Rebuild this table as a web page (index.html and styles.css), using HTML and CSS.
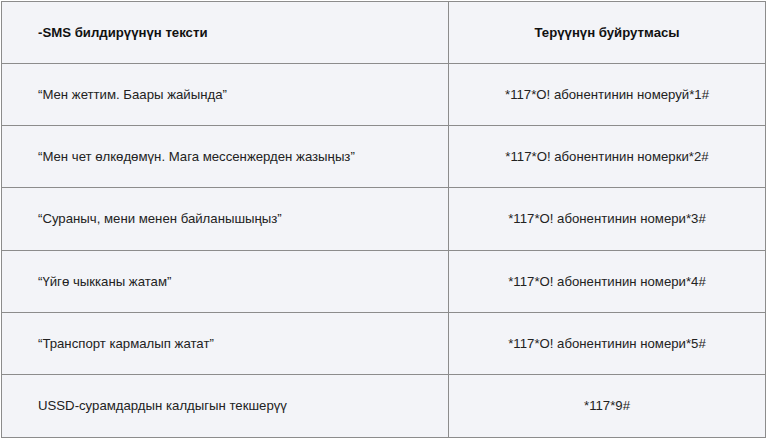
FILE: index.html
```html
<!DOCTYPE html>
<html lang="ky">
<head>
<meta charset="utf-8">
<title>USSD</title>
<link rel="stylesheet" href="styles.css">
</head>
<body>
<table class="sms-table">
  <thead>
    <tr>
      <th class="col-text">-SMS билдирүүнүн тексти</th>
      <th class="col-code">Терүүнүн буйрутмасы</th>
    </tr>
  </thead>
  <tbody>
    <tr>
      <td class="col-text">“Мен жеттим. Баары жайында”</td>
      <td class="col-code">*117*O! абонентинин номеруй*1#</td>
    </tr>
    <tr>
      <td class="col-text">“Мен чет өлкөдөмүн. Мага мессенжерден жазыңыз”</td>
      <td class="col-code">*117*O! абонентинин номерки*2#</td>
    </tr>
    <tr class="tall">
      <td class="col-text">“Сураныч, мени менен байланышыңыз”</td>
      <td class="col-code">*117*O! абонентинин номери*3#</td>
    </tr>
    <tr>
      <td class="col-text">“Үйгө чыкканы жатам”</td>
      <td class="col-code">*117*O! абонентинин номери*4#</td>
    </tr>
    <tr>
      <td class="col-text">“Транспорт кармалып жатат”</td>
      <td class="col-code">*117*O! абонентинин номери*5#</td>
    </tr>
    <tr class="tall">
      <td class="col-text">USSD-сурамдардын калдыгын текшерүү</td>
      <td class="col-code">*117*9#</td>
    </tr>
  </tbody>
</table>
</body>
</html>
```
FILE: styles.css
```css
html, body {
  margin: 0;
  padding: 0;
  background: #ffffff;
}

body {
  padding: 1px 0 0 1px;
  font-family: "Liberation Sans", Arial, sans-serif;
  font-size: 13.2px;
  color: #222222;
}

.sms-table {
  border-collapse: collapse;
  width: 765px;
  background: #f3f4f8;
}

.sms-table th,
.sms-table td {
  border: 1px solid #8c8c8c;
  height: 61px;
  padding: 0;
  vertical-align: middle;
  font-weight: normal;
  line-height: 16px;
}

.sms-table tr.tall td {
  height: 62px;
}

.sms-table th {
  font-weight: bold;
  color: #111111;
}

.col-text {
  width: 410px;
  padding-left: 36px !important;
  text-align: left;
}

.col-code {
  text-align: center;
}
```
